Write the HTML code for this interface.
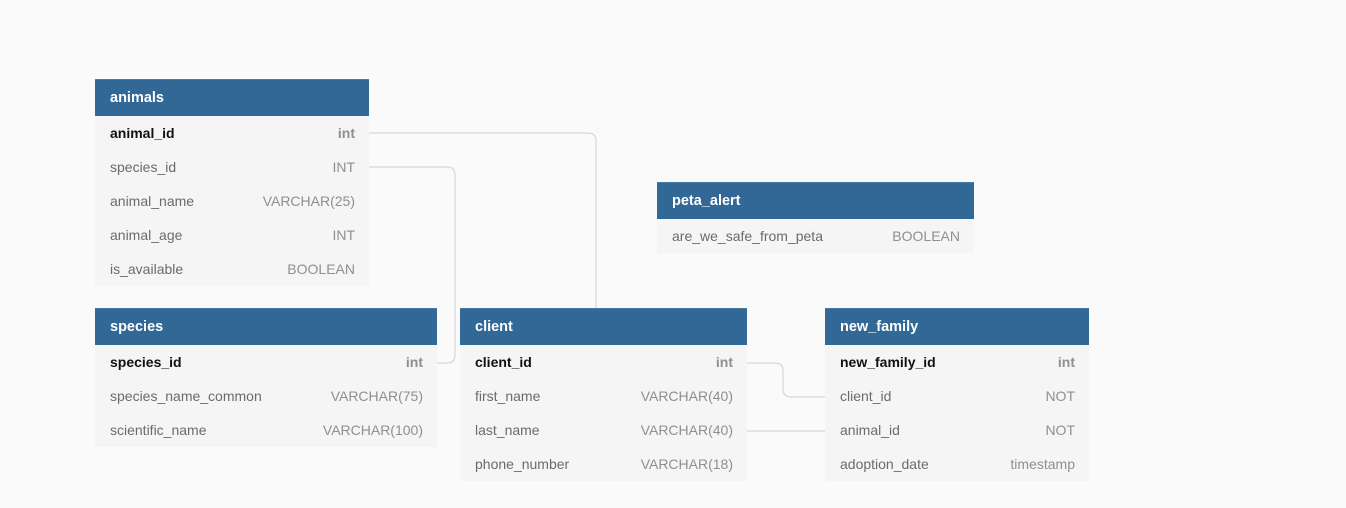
<!DOCTYPE html>
<html><head><meta charset="utf-8"><style>
*{margin:0;padding:0;box-sizing:border-box}
body{width:1346px;height:508px;background:#fafafa;position:relative;overflow:hidden;font-family:"Liberation Sans",sans-serif;font-size:14px}
.t{position:absolute;background:#f5f5f5}
.h{background:#316896;color:#fff;font-weight:bold;height:37px;line-height:37px;padding-left:15px;font-size:14.5px;border-top:1px solid #4a7ba5}
.r{height:34px;line-height:34px;padding:0 14px 0 15px;display:flex;justify-content:space-between;color:#6b6b6b}
.r span:last-child{color:#8f8f8f}
.r.k{color:#111;font-weight:bold}
.r.k span:last-child{color:#8f8f8f}
svg{position:absolute;left:0;top:0}
</style></head><body>
<svg width="1346" height="508" fill="none" stroke="#d8d8d8" stroke-width="1.3">
<path d="M369 133 H588 Q596 133 596 141 V308"/>
<path d="M369 167 H447 Q455 167 455 175 V355 Q455 363 447 363 H437"/>
<path d="M747 363 H775 Q783 363 783 371 V389 Q783 397 791 397 H825"/>
<path d="M747 431 H825"/>
</svg>
<div class="t" style="left:95px;top:79px;width:274px">
<div class="h">animals</div>
<div class="r k"><span>animal_id</span><span>int</span></div>
<div class="r"><span>species_id</span><span>INT</span></div>
<div class="r"><span>animal_name</span><span>VARCHAR(25)</span></div>
<div class="r"><span>animal_age</span><span>INT</span></div>
<div class="r"><span>is_available</span><span>BOOLEAN</span></div>
</div>
<div class="t" style="left:657px;top:182px;width:317px">
<div class="h">peta_alert</div>
<div class="r"><span>are_we_safe_from_peta</span><span>BOOLEAN</span></div>
</div>
<div class="t" style="left:95px;top:308px;width:342px">
<div class="h">species</div>
<div class="r k"><span>species_id</span><span>int</span></div>
<div class="r"><span>species_name_common</span><span>VARCHAR(75)</span></div>
<div class="r"><span>scientific_name</span><span>VARCHAR(100)</span></div>
</div>
<div class="t" style="left:460px;top:308px;width:287px">
<div class="h">client</div>
<div class="r k"><span>client_id</span><span>int</span></div>
<div class="r"><span>first_name</span><span>VARCHAR(40)</span></div>
<div class="r"><span>last_name</span><span>VARCHAR(40)</span></div>
<div class="r"><span>phone_number</span><span>VARCHAR(18)</span></div>
</div>
<div class="t" style="left:825px;top:308px;width:264px">
<div class="h">new_family</div>
<div class="r k"><span>new_family_id</span><span>int</span></div>
<div class="r"><span>client_id</span><span>NOT</span></div>
<div class="r"><span>animal_id</span><span>NOT</span></div>
<div class="r"><span>adoption_date</span><span>timestamp</span></div>
</div>
</body></html>
